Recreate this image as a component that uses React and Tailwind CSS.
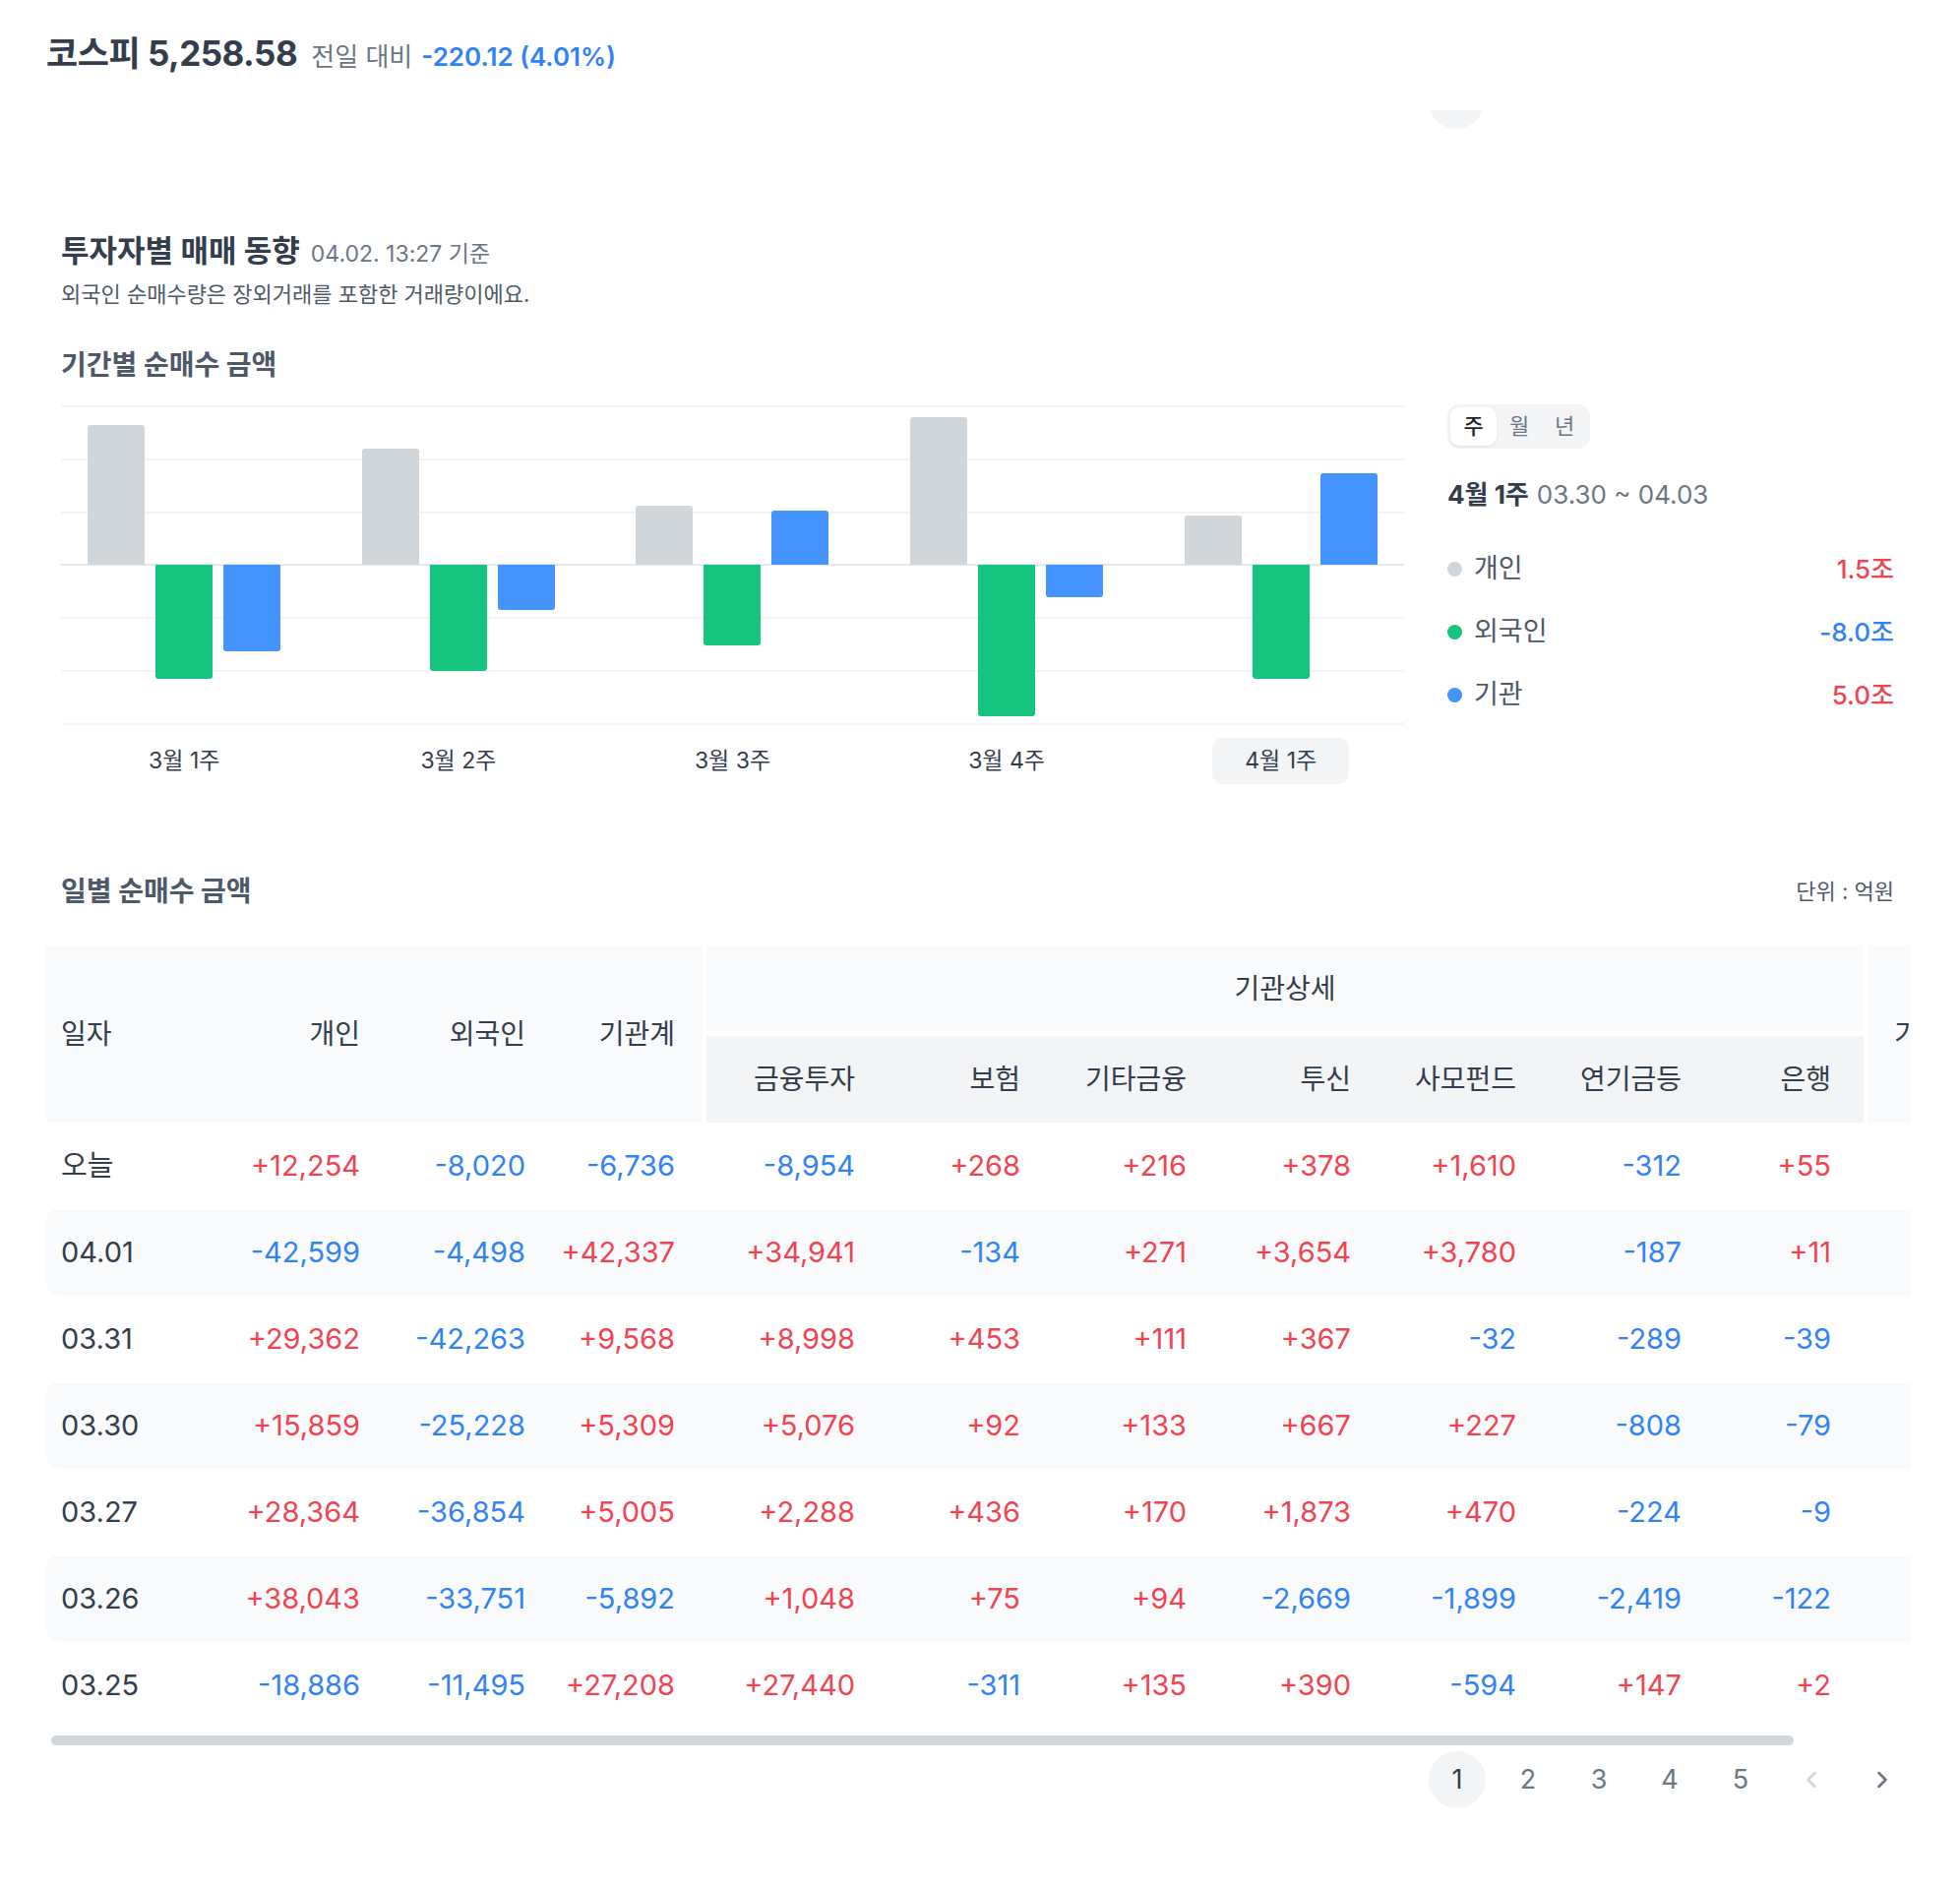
import React from "react";
import { ChevronLeft, ChevronRight } from "lucide-react";

const weeks = [
  { label: "3월 1주", v: [142, -116, -88] },
  { label: "3월 2주", v: [118, -108, -46] },
  { label: "3월 3주", v: [60, -82, 55] },
  { label: "3월 4주", v: [150, -154, -33] },
  { label: "4월 1주", v: [50, -116, 93] },
];

const barColors = ["bg-[#d1d6db]", "bg-[#15c47e]", "bg-[#4593fc]"];

const rows = [
  ["오늘", "+12,254", "-8,020", "-6,736", "-8,954", "+268", "+216", "+378", "+1,610", "-312", "+55"],
  ["04.01", "-42,599", "-4,498", "+42,337", "+34,941", "-134", "+271", "+3,654", "+3,780", "-187", "+11"],
  ["03.31", "+29,362", "-42,263", "+9,568", "+8,998", "+453", "+111", "+367", "-32", "-289", "-39"],
  ["03.30", "+15,859", "-25,228", "+5,309", "+5,076", "+92", "+133", "+667", "+227", "-808", "-79"],
  ["03.27", "+28,364", "-36,854", "+5,005", "+2,288", "+436", "+170", "+1,873", "+470", "-224", "-9"],
  ["03.26", "+38,043", "-33,751", "-5,892", "+1,048", "+75", "+94", "-2,669", "-1,899", "-2,419", "-122"],
  ["03.25", "-18,886", "-11,495", "+27,208", "+27,440", "-311", "+135", "+390", "-594", "+147", "+2"],
];

const leftW = ["w-[152px]", "w-[168px]", "w-[152px]"];
const midW = ["w-[151px]", "w-[168px]", "w-[169px]", "w-[167px]", "w-[168px]", "w-[168px]", "w-[152px]"];
const midHeads = ["금융투자", "보험", "기타금융", "투신", "사모펀드", "연기금등", "은행"];

function valColor(v) {
  return v.startsWith("-") ? "text-[#3182f6]" : "text-[#f04452]";
}

function Bar({ h, color }) {
  const pos = h >= 0;
  const a = Math.abs(h);
  return (
    <div className="w-[58px] h-full">
      <div
        className={pos ? `${color} rounded-t-[3px]` : `${color} rounded-b-[3px]`}
        style={{ marginTop: pos ? 162 - a : 162, height: a }}
      />
    </div>
  );
}

export default function App() {
  return (
    <div className="w-[1992px] min-h-[1918px] bg-white font-[Inter,'Noto_Sans_CJK_KR',sans-serif] text-[#333d4b]">
      {/* Top title */}
      <div className="h-[112px] pl-[47px] pt-[28px]">
        <div className="flex items-baseline h-[44px]">
          <span className="text-[35px] font-bold text-[#333d4b] tracking-[-0.5px]">코스피 5,258.58</span>
          <span className="ml-[14px] text-[26px] text-[#6b7684]">전일 대비</span>
          <span className="ml-[9px] text-[26px] font-semibold text-[#3182f6]">-220.12 (4.01%)</span>
        </div>
      </div>
      {/* ghost circle strip */}
      <div className="h-[19px] pl-[1452px]">
        <div className="w-[56px] h-[19px] overflow-hidden">
          <div className="w-[56px] h-[56px] -mt-[37px] rounded-full bg-[#f2f4f6]" />
        </div>
      </div>

      <div className="pl-[62px] pr-[67px]">
        <div className="mt-[101px] h-[38px] flex items-baseline">
          <span className="text-[31px] font-bold text-[#333d4b]">투자자별 매매 동향</span>
          <span className="ml-[11px] text-[23px] text-[#6b7684]">04.02. 13:27 기준</span>
        </div>
        <div className="mt-[14px] h-[30px] flex items-center text-[22px] text-[#4e5968]">
          외국인 순매수량은 장외거래를 포함한 거래량이에요.
        </div>
        <div className="mt-[39px] h-[36px] flex items-center text-[28px] font-bold text-[#4e5968]">
          기간별 순매수 금액
        </div>

        {/* Chart row */}
        <div className="mt-[23px] flex">
          <div className="w-[1365px]">
            <div className="relative w-[1365px] h-[325px]">
              <div className="absolute inset-0 flex flex-col justify-between">
                {[0, 1, 2, 3, 4, 5, 6].map((i) => (
                  <div key={i} className={i === 3 ? "h-[2px] bg-[#e5e8eb]" : "h-[2px] bg-[#f2f4f6]"} />
                ))}
              </div>
              <div className="relative -mx-[14px] flex h-full">
                {weeks.map((w) => (
                  <div key={w.label} className="flex-1 flex justify-center gap-[11px] h-full">
                    {w.v.map((h, j) => (
                      <Bar key={j} h={h} color={barColors[j]} />
                    ))}
                  </div>
                ))}
              </div>
            </div>
            <div className="-mx-[14px] mt-[13px] flex">
              {weeks.map((w, i) => (
                <div key={w.label} className="flex-1 flex justify-center">
                  <div
                    className={
                      i === 4
                        ? "w-[139px] h-[47px] rounded-[10px] bg-[#f2f4f6] flex items-center justify-center text-[23px] text-[#333d4b]"
                        : "w-[139px] h-[47px] flex items-center justify-center text-[23px] text-[#333d4b]"
                    }
                  >
                    {w.label}
                  </div>
                </div>
              ))}
            </div>
          </div>

          <div className="ml-[44px] w-[454px] -mt-px">
            <div className="inline-flex p-[3px] rounded-[12px] bg-[#f2f4f6]">
              <div className="w-[47px] h-[39px] rounded-[9px] bg-white shadow-[0_1px_3px_rgba(0,0,0,0.08)] flex items-center justify-center text-[22px] font-medium text-[#191f28]">주</div>
              <div className="w-[46px] h-[39px] flex items-center justify-center text-[22px] text-[#6b7684]">월</div>
              <div className="w-[46px] h-[39px] flex items-center justify-center text-[22px] text-[#6b7684]">년</div>
            </div>
            <div className="mt-[30px] h-[32px] flex items-center text-[26px]">
              <span className="font-bold text-[#333d4b]">4월 1주</span>
              <span className="ml-[8px] text-[#6b7684]">03.30 ~ 04.03</span>
            </div>
            <div className="mt-[28px]">
              {[
                ["bg-[#d1d6db]", "개인", "1.5조", "text-[#f04452]"],
                ["bg-[#15c47e]", "외국인", "-8.0조", "text-[#3182f6]"],
                ["bg-[#4593fc]", "기관", "5.0조", "text-[#f04452]"],
              ].map(([dot, name, val, vc]) => (
                <div key={name} className="h-[64px] flex items-center justify-between">
                  <div className="flex items-center">
                    <div className={`w-[15px] h-[15px] rounded-full ${dot}`} />
                    <span className="ml-[12px] text-[27px] text-[#4e5968]">{name}</span>
                  </div>
                  <span className={`text-[26px] font-medium ${vc}`}>{val}</span>
                </div>
              ))}
            </div>
          </div>
        </div>

        {/* Daily table */}
        <div className="mt-[91px] h-[36px] flex items-center justify-between">
          <span className="text-[28px] font-bold text-[#4e5968]">일별 순매수 금액</span>
          <span className="text-[22px] text-[#4e5968]">단위 : 억원</span>
        </div>

        <div className="-ml-[15px] w-[1895px] mt-[37px]">
          <div className="overflow-hidden w-[1895px]">
            <div className="w-[2016px]">
              {/* header */}
              <div className="flex h-[180px] text-[28px] text-[#333d4b]">
                <div className="w-[667px] bg-[#f9fafb] flex items-center pr-[28px]">
                  <div className="w-[167px] pl-[15px]">일자</div>
                  <div className="w-[152px] text-right">개인</div>
                  <div className="w-[168px] text-right">외국인</div>
                  <div className="w-[152px] text-right">기관계</div>
                </div>
                <div className="w-[4px]" />
                <div className="w-[1176px] flex flex-col">
                  <div className="h-[87px] bg-[#f9fafb] flex items-center justify-center">기관상세</div>
                  <div className="h-[5px]" />
                  <div className="h-[88px] bg-[#f2f4f6] flex items-center pr-[33px]">
                    {midHeads.map((h, i) => (
                      <div key={h} className={`${midW[i]} text-right`}>{h}</div>
                    ))}
                  </div>
                </div>
                <div className="w-[4px]" />
                <div className="w-[165px] bg-[#f9fafb] flex items-center">
                  <div className="w-[130px] text-right whitespace-nowrap">기타법인</div>
                </div>
              </div>
              {/* body */}
              {rows.map((r, i) => (
                <div
                  key={r[0]}
                  className={
                    i % 2 === 1
                      ? "flex h-[88px] items-center rounded-[12px] bg-[#f9fafb] text-[29px]"
                      : "flex h-[88px] items-center text-[29px]"
                  }
                >
                  <div className="w-[167px] pl-[15px] text-[#333d4b]">{r[0]}</div>
                  {r.slice(1, 4).map((v, j) => (
                    <div key={j} className={`${leftW[j]} text-right ${valColor(v)}`}>{v}</div>
                  ))}
                  <div className="w-[32px]" />
                  {r.slice(4, 11).map((v, j) => (
                    <div key={j} className={`${midW[j]} text-right ${valColor(v)}`}>{v}</div>
                  ))}
                  <div className="w-[37px]" />
                  <div className="w-[134px]" />
                </div>
              ))}
            </div>
          </div>
          <div className="mt-[7px] ml-[5px] w-[1771px] h-[10px] rounded-full bg-[#d1d6db]" />
          <div className="mt-[6px] flex justify-end gap-[14px] text-[27px]">
            <div className="w-[58px] h-[58px] rounded-full bg-[#f2f4f6] flex items-center justify-center text-[#333d4b]">1</div>
            {["2", "3", "4", "5"].map((n) => (
              <div key={n} className="w-[58px] h-[58px] rounded-full flex items-center justify-center text-[#6b7684]">{n}</div>
            ))}
            <div className="w-[58px] h-[58px] flex items-center justify-center text-[#d1d6db]">
              <ChevronLeft size={28} strokeWidth={2.2} />
            </div>
            <div className="w-[58px] h-[58px] flex items-center justify-center text-[#6b7684]">
              <ChevronRight size={28} strokeWidth={2.2} />
            </div>
          </div>
        </div>
      </div>
    </div>
  );
}
